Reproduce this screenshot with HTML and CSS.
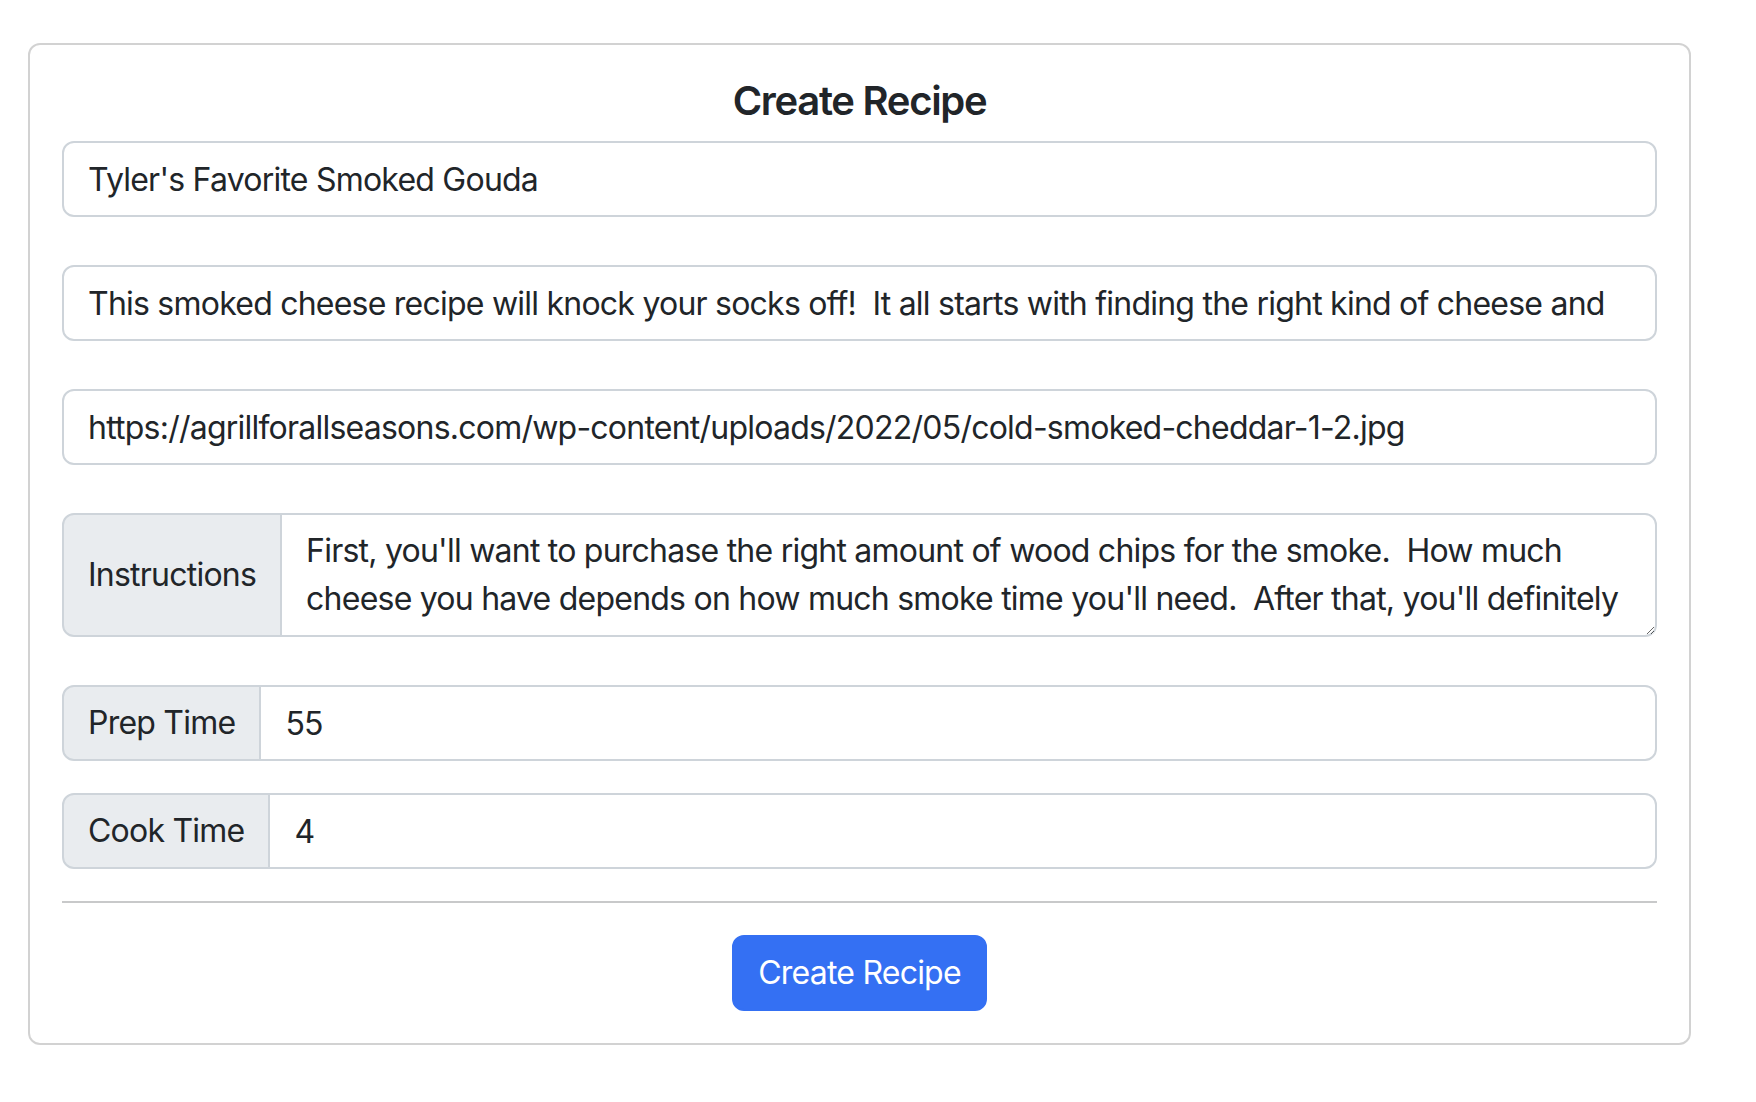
FILE: index.html
```html
<!DOCTYPE html>
<html lang="en">
<head>
<meta charset="utf-8">
<title>Create Recipe</title>
<link rel="stylesheet" href="styles.css">
</head>
<body>
<div class="page">
  <form class="card">
    <h5 class="title">Create Recipe</h5>
    <input class="field mb-4" type="text" value="Tyler's Favorite Smoked Gouda">
    <input class="field mb-4" type="text" value="This smoked cheese recipe will knock your socks off!  It all starts with finding the right kind of cheese and">
    <input class="field mb-4" type="text" value="https://agrillforallseasons.com/wp-content/uploads/2022/05/cold-smoked-cheddar-1-2.jpg">
    <div class="group mb-4">
      <span class="group-text">Instructions</span>
      <textarea class="field area" rows="2">First, you'll want to purchase the right amount of wood chips for the smoke.  How much cheese you have depends on how much smoke time you'll need.  After that, you'll definitely use one or more covers, as uneven sources are common.</textarea>
    </div>
    <div class="group mb-3">
      <span class="group-text">Prep Time</span>
      <input class="field" type="text" value="55">
    </div>
    <div class="group">
      <span class="group-text">Cook Time</span>
      <input class="field" type="text" value="4">
    </div>
    <hr class="rule">
    <div class="actions">
      <button class="btn" type="button">Create Recipe</button>
    </div>
  </form>
</div>
</body>
</html>
```

FILE: styles.css
```css
* { box-sizing: border-box; }
html, body { margin: 0; padding: 0; background: #fff; }
body {
  font-family: Inter, "Liberation Sans", sans-serif;
  color: #212529;
  font-size: 32px;
  line-height: 1.5;
  letter-spacing: -0.77px;
}
.page {
  padding: 43px 0 0 28px;
}
.card {
  width: 1663px;
  border: 2px solid rgba(0,0,0,0.175);
  border-radius: 12px;
  padding: 32px;
  display: flex;
  flex-direction: column;
}
.title {
  margin: 0 0 16px;
  font-size: 40px;
  line-height: 1.2;
  font-weight: 600;
  letter-spacing: -1.3px;
  text-align: center;
}
.field {
  display: block;
  width: 100%;
  height: 76px;
  padding: 12px 24px;
  font-family: inherit;
  font-size: 32px;
  line-height: 48px;
  letter-spacing: -0.77px;
  color: #212529;
  background: #fff;
  border: 2px solid #ced4da;
  border-radius: 12px;
  outline: none;
  margin: 0;
}
.mb-4 { margin-bottom: 48px; }
.mb-3 { margin-bottom: 32px; }
.group {
  display: flex;
  align-items: stretch;
  width: 100%;
}
.group-text {
  display: flex;
  align-items: center;
  padding: 12px 24px;
  background: #e9ecef;
  border: 2px solid #ced4da;
  border-radius: 12px 0 0 12px;
  white-space: nowrap;
  font-size: 32px;
  line-height: 48px;
}
.group .field {
  flex: 1 1 auto;
  width: 1%;
  margin-left: -2px;
  border-radius: 0 12px 12px 0;
}
.area {
  height: 124px;
  resize: vertical;
  overflow: hidden;
}
.rule {
  margin: 32px 0;
  border: 0;
  border-top: 2px solid #c8c9ca;
  height: 0;
}
.actions {
  display: flex;
  justify-content: center;
}
.btn {
  font-family: inherit;
  font-size: 32px;
  line-height: 48px;
  letter-spacing: -0.77px;
  padding: 12px 24px;
  color: #fff;
  background: #3470f3;
  border: 2px solid #3470f3;
  border-radius: 12px;
  cursor: pointer;
}
```
